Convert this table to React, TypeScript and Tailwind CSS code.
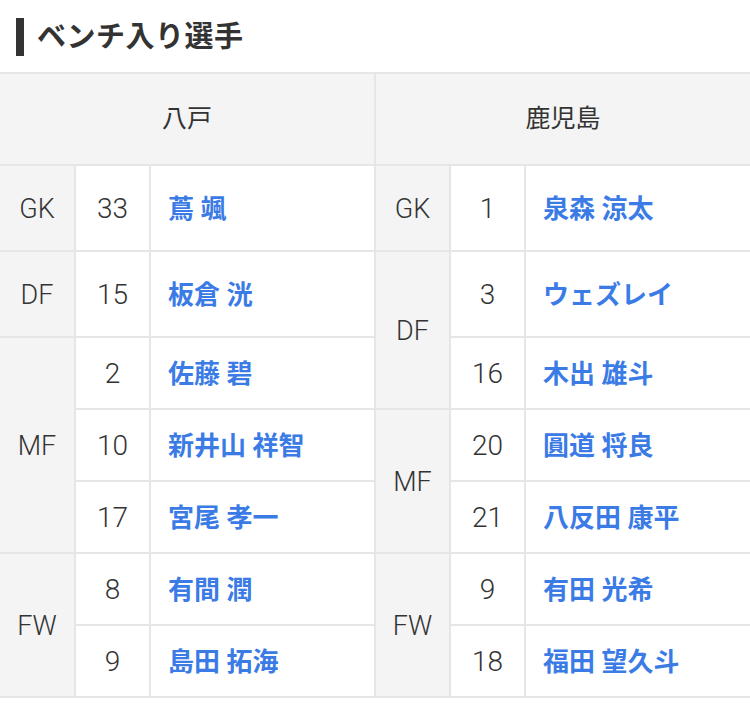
import React from "react";

type Cell = { text: string; row: string; col: string; kind: "pos" | "num" | "name" };

const cells: Cell[] = [
  // left
  { text: "GK", row: "row-start-2", col: "col-start-1", kind: "pos" },
  { text: "33", row: "row-start-2", col: "col-start-2", kind: "num" },
  { text: "蔦 颯", row: "row-start-2", col: "col-start-3", kind: "name" },
  { text: "DF", row: "row-start-3", col: "col-start-1", kind: "pos" },
  { text: "15", row: "row-start-3", col: "col-start-2", kind: "num" },
  { text: "板倉 洸", row: "row-start-3", col: "col-start-3", kind: "name" },
  { text: "MF", row: "row-start-4 row-span-3", col: "col-start-1", kind: "pos" },
  { text: "2", row: "row-start-4", col: "col-start-2", kind: "num" },
  { text: "佐藤 碧", row: "row-start-4", col: "col-start-3", kind: "name" },
  { text: "10", row: "row-start-5", col: "col-start-2", kind: "num" },
  { text: "新井山 祥智", row: "row-start-5", col: "col-start-3", kind: "name" },
  { text: "17", row: "row-start-6", col: "col-start-2", kind: "num" },
  { text: "宮尾 孝一", row: "row-start-6", col: "col-start-3", kind: "name" },
  { text: "FW", row: "row-start-7 row-span-2", col: "col-start-1", kind: "pos" },
  { text: "8", row: "row-start-7", col: "col-start-2", kind: "num" },
  { text: "有間 潤", row: "row-start-7", col: "col-start-3", kind: "name" },
  { text: "9", row: "row-start-8", col: "col-start-2", kind: "num" },
  { text: "島田 拓海", row: "row-start-8", col: "col-start-3", kind: "name" },
  // right
  { text: "GK", row: "row-start-2", col: "col-start-4", kind: "pos" },
  { text: "1", row: "row-start-2", col: "col-start-5", kind: "num" },
  { text: "泉森 涼太", row: "row-start-2", col: "col-start-6", kind: "name" },
  { text: "DF", row: "row-start-3 row-span-2", col: "col-start-4", kind: "pos" },
  { text: "3", row: "row-start-3", col: "col-start-5", kind: "num" },
  { text: "ウェズレイ", row: "row-start-3", col: "col-start-6", kind: "name" },
  { text: "16", row: "row-start-4", col: "col-start-5", kind: "num" },
  { text: "木出 雄斗", row: "row-start-4", col: "col-start-6", kind: "name" },
  { text: "MF", row: "row-start-5 row-span-2", col: "col-start-4", kind: "pos" },
  { text: "20", row: "row-start-5", col: "col-start-5", kind: "num" },
  { text: "圓道 将良", row: "row-start-5", col: "col-start-6", kind: "name" },
  { text: "21", row: "row-start-6", col: "col-start-5", kind: "num" },
  { text: "八反田 康平", row: "row-start-6", col: "col-start-6", kind: "name" },
  { text: "FW", row: "row-start-7 row-span-2", col: "col-start-4", kind: "pos" },
  { text: "9", row: "row-start-7", col: "col-start-5", kind: "num" },
  { text: "有田 光希", row: "row-start-7", col: "col-start-6", kind: "name" },
  { text: "18", row: "row-start-8", col: "col-start-5", kind: "num" },
  { text: "福田 望久斗", row: "row-start-8", col: "col-start-6", kind: "name" },
];

export default function App() {
  return (
    <div
      className="w-[750px] h-[709px] bg-white text-[#333]"
      style={{ fontFamily: 'Roboto, "Noto Sans CJK JP", sans-serif' }}
    >
      <div className="h-[72px] flex items-start pt-[18px] pl-[16px]">
        <div className="w-[8px] h-[38px] bg-[#333]" />
        <h2 className="ml-[13px] text-[29px] font-bold leading-[38px] tracking-[0.5px]">ベンチ入り選手</h2>
      </div>
      <div className="border-y-2 border-[#e6e6e6] bg-[#e6e6e6] grid grid-cols-[74px_73px_223px_73px_73px_1fr] grid-rows-[90px_84px_84px_70px_70px_70px_70px_70px] gap-[2px]">
        <div className="row-start-1 col-start-1 col-span-3 bg-[#f4f4f4] flex items-center justify-center text-[25px]">
          八戸
        </div>
        <div className="row-start-1 col-start-4 col-span-3 bg-[#f4f4f4] flex items-center justify-center text-[25px]">
          鹿児島
        </div>
        {cells.map((c, i) => {
          if (c.kind === "pos")
            return (
              <div key={i} className={`${c.row} ${c.col} bg-[#f4f4f4] flex items-center justify-center text-[27px] font-light pt-[2px]`}>
                {c.text}
              </div>
            );
          if (c.kind === "num")
            return (
              <div key={i} className={`${c.row} ${c.col} bg-white flex items-center justify-center text-[28px] font-light pt-[2px]`}>
                {c.text}
              </div>
            );
          return (
            <div key={i} className={`${c.row} ${c.col} bg-white flex items-center pl-[17px] pt-[3px] text-[26px] font-bold text-[#3b7be6]`}>
              {c.text}
            </div>
          );
        })}
      </div>
    </div>
  );
}
